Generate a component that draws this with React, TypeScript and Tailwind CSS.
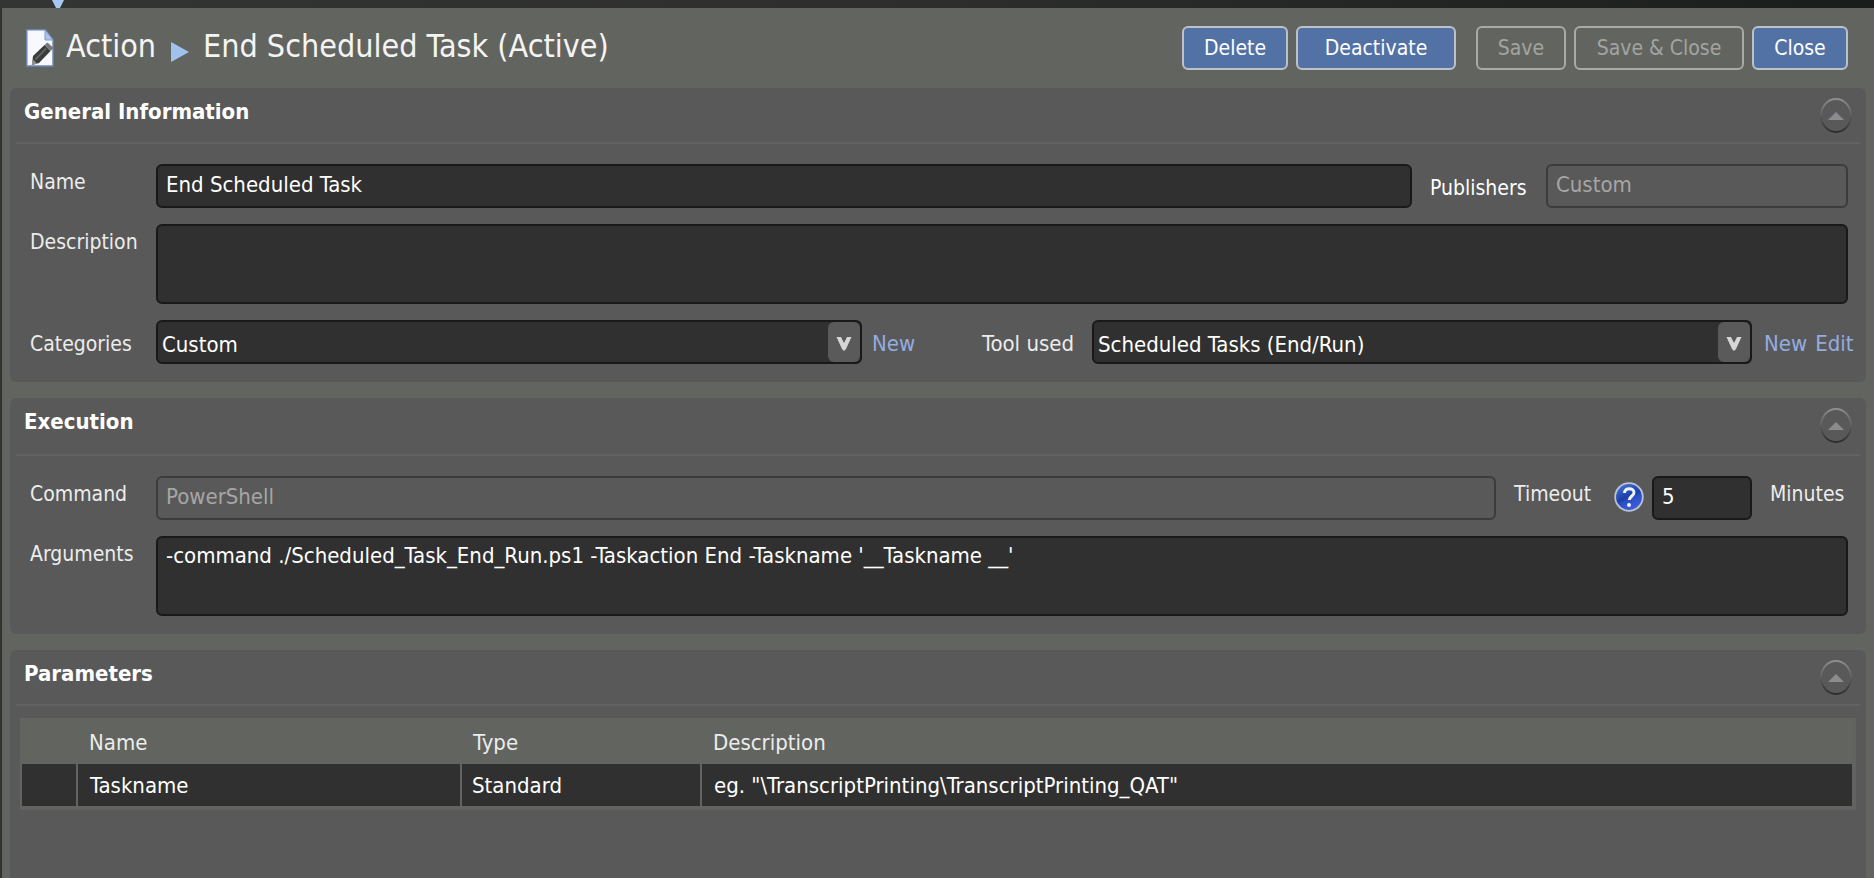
import React, { useState } from 'react';

const fieldBase = 'block w-full rounded-md border-2 px-2 text-[22px] outline-none';
const fieldDark = fieldBase + ' border-[#191919] bg-[#303030] text-white';
const fieldOff = fieldBase + ' border-[#3c3c3c] bg-transparent text-[#a6a6a6]';
const fieldLine = ' h-11 pb-1 leading-9';
const fieldArea = ' h-20 resize-none py-1 leading-7';

const buttonBase = 'h-11 rounded-md border-2 text-[21px] leading-10';
const buttonBlue = buttonBase + ' border-[#bdc1c8] bg-[#5272a6] text-white';
const buttonOff = buttonBase + ' border-[#a9aaa8] text-[#a3a4a2]';

function CollapseIcon({ id }: { id: string }) {
  return (
    <svg width="32" height="36" viewBox="0 0 32 36" aria-hidden="true">
      <defs>
        <linearGradient id={id} x1="0" y1="0" x2="0" y2="1">
          <stop offset="0" stopColor="#8e8e8e" />
          <stop offset="0.5" stopColor="#5e5e5e" />
          <stop offset="1" stopColor="#2c2c2c" />
        </linearGradient>
      </defs>
      <ellipse cx="16" cy="17.500" rx="15" ry="16.500" fill="none" stroke={`url(#${id})`} strokeWidth="1.8" />
      <path d="M16 14l8 8H8z" fill="#8c8c8f" />
    </svg>
  );
}

function Panel(props: { id: string; title: string; head: string; className?: string; children: React.ReactNode }) {
  const [open, setOpen] = useState(true);
  return (
    <section className={'rounded-md bg-[#595959] ' + (props.className ?? '')}>
      <div className={'mx-1.5 flex items-start justify-between border-b-2 border-[#626262] pr-2 pl-2 ' + props.head}>
        <h2 className="pt-2.5 text-[22px] leading-7 font-bold text-white">{props.title}</h2>
        <button type="button" aria-label={'Collapse ' + props.title} className="mt-2.5" onClick={() => setOpen(!open)}>
          <CollapseIcon id={props.id} />
        </button>
      </div>
      {open && props.children}
    </section>
  );
}

function Select({ id, value }: { id: string; value: string }) {
  return (
    <div className="grid">
      <select
        id={id}
        defaultValue={value}
        className="col-start-1 row-start-1 h-11 w-full appearance-none rounded-md border-2 border-[#191919] bg-[#303030] pt-1 pl-1 text-[22px] text-white outline-none"
      >
        <option>{value}</option>
      </select>
      <span className="pointer-events-none col-start-1 row-start-1 m-0.5 flex w-8 items-center justify-center justify-self-end rounded-md bg-[#5a5a5a] pt-1">
        <svg width="16" height="16" viewBox="0 0 16 16" aria-hidden="true">
          <path d="M0.500 1h4.500l3 6 3-6h4.500L10 13l-2 2-2-2z" fill="#d6d6d6" />
        </svg>
      </span>
    </div>
  );
}

const label = 'pt-1 text-[21px] leading-7 text-[#ececec]';
const link = 'text-[#94ace0]';

export default function App() {
  return (
    <div className="flex min-h-screen flex-col bg-[#323432] font-['DejaVu_Sans_Condensed','Noto_Sans',sans-serif]">
      <div className="flex h-2 bg-linear-to-r from-[#333533] via-[#2c2d2c] to-[#1a1e1b] pl-[51px]">
        <svg width="14" height="8" viewBox="0 0 14 8" aria-hidden="true">
          <path d="M1 0h12L9 8H5z" fill="#a6c8f2" />
        </svg>
      </div>
      <main className="ml-0.5 flex grow flex-col bg-[#626460] pr-2 pl-2">
        <header className="flex h-20 items-start pt-[18px] pr-[18px] pl-4">
          <svg className="mt-[3px]" width="28" height="38" viewBox="0 0 28 38" aria-hidden="true">
            <path d="M0.800 0.800h18.200L27 11v26H0.800z" fill="#f7f9ff" stroke="#6c86b4" strokeWidth="1.4" />
            <path d="M19 0.800V11h8z" fill="#a9c4ec" stroke="#7f9cc8" />
            <path d="M6 36l1-9L18.500 16l6 6L13 34z" fill="#3b3d3b" />
            <path d="M5.500 36.500l1.500-6 4 4z" fill="#8f918f" />
            <path d="M9.500 30.500L20 19.500" stroke="#6a6c6a" strokeWidth="1.5" />
            <path d="M18.500 16l3-2.500 6 5.500-3 3z" fill="#777977" />
          </svg>
          <h1 className="flex items-center pt-0.5 text-[32px] leading-9 text-[#f4f4f4]">
            <span className="w-[117px] pl-3">Action</span>
            <svg className="mt-3 mr-3.5" width="18" height="20" viewBox="0 0 18 20" aria-hidden="true">
              <path d="M0 0l18 10L0 20z" fill="#a0c3ee" />
            </svg>
            <span>End Scheduled Task (Active)</span>
          </h1>
          <div className="ml-auto flex gap-2">
            <button type="button" className={buttonBlue + ' w-[106px]'}>Delete</button>
            <button type="button" className={buttonBlue + ' mr-3 w-40'}>Deactivate</button>
            <button type="button" disabled className={buttonOff + ' w-[90px]'}>Save</button>
            <button type="button" disabled className={buttonOff + ' w-[170px]'}>Save &amp; Close</button>
            <button type="button" className={buttonBlue + ' w-24'}>Close</button>
          </div>
        </header>

        <Panel id="c1" title="General Information" head="h-14">
          <div className="flex flex-col gap-4 pt-5 pr-[18px] pb-[18px] pl-5">
            <div className="grid grid-cols-[126px_1fr_134px_302px]">
              <label htmlFor="name" className={label}>Name</label>
              <input id="name" defaultValue="End Scheduled Task" className={fieldDark + fieldLine} />
              <label htmlFor="publishers" className="self-center pt-1 pl-[18px] text-[21px] leading-7 text-white">Publishers</label>
              <input id="publishers" disabled defaultValue="Custom" className={fieldOff + fieldLine} />
            </div>
            <div className="grid grid-cols-[126px_1fr]">
              <label htmlFor="description" className={label}>Description</label>
              <textarea id="description" className={fieldDark + fieldArea} />
            </div>
            <div className="grid grid-cols-[126px_706fr_230px_660fr_96px] items-center">
              <label htmlFor="categories" className={label}>Categories</label>
              <Select id="categories" value="Custom" />
              <div className="flex justify-between pt-1 pr-[18px] pl-2.5 text-[22px] leading-7 text-[#ececec]">
                <a href="#new-category" className={link}>New</a>
                <label htmlFor="tool">Tool used</label>
              </div>
              <Select id="tool" value="Scheduled Tasks (End/Run)" />
              <div className="flex gap-2 pt-1 pl-3 text-[22px] leading-7">
                <a href="#new-tool" className={link}>New</a>
                <a href="#edit-tool" className={link}>Edit</a>
              </div>
            </div>
          </div>
        </Panel>

        <Panel id="c2" title="Execution" head="h-[58px]" className="mt-4">
          <div className="flex flex-col gap-4 pt-5 pr-[18px] pb-[18px] pl-5">
            <div className="grid grid-cols-[126px_1fr_156px_100px_96px]">
              <label htmlFor="command" className={label}>Command</label>
              <input id="command" disabled defaultValue="PowerShell" className={fieldOff + fieldLine} />
              <div className="flex justify-between pr-2 pl-[18px]">
                <label htmlFor="timeout" className={label}>Timeout</label>
                <button type="button" aria-label="Help" className="self-start pt-1.5">
                  <svg width="30" height="30" viewBox="0 0 30 30" aria-hidden="true">
                    <defs>
                      <linearGradient id="help" x1="0.2" y1="0" x2="0.7" y2="1">
                        <stop offset="0" stopColor="#4a74d8" />
                        <stop offset="0.5" stopColor="#1a3fa8" />
                        <stop offset="0.6" stopColor="#2b4fc6" />
                        <stop offset="1" stopColor="#3f62dc" />
                      </linearGradient>
                    </defs>
                    <circle cx="15" cy="15" r="13.800" fill="url(#help)" stroke="#b9c1d4" strokeWidth="1.8" />
                    <path d="M10.500 11c0-6 9.500-5.500 9.500-.5 0 3.500-4.800 4-4.800 7.500" fill="none" stroke="#f1f3fa" strokeWidth="3" />
                    <circle cx="15" cy="23" r="2" fill="#f1f3fa" />
                  </svg>
                </button>
              </div>
              <input id="timeout" defaultValue="5" className={fieldDark + fieldLine} />
              <span className={label + ' pl-[18px]'}>Minutes</span>
            </div>
            <div className="grid grid-cols-[126px_1fr]">
              <label htmlFor="arguments" className={label}>Arguments</label>
              <textarea
                id="arguments"
                spellCheck={false}
                defaultValue="-command ./Scheduled_Task_End_Run.ps1 -Taskaction End -Taskname '__Taskname __'"
                className={fieldDark + fieldArea}
              />
            </div>
          </div>
        </Panel>

        <Panel id="c3" title="Parameters" head="h-14" className="mt-4 grow rounded-b-none">
          <div className="pt-3 pr-2.5 pl-2.5">
            <div className="border-r-2 border-b-2 border-[#626262]">
              <table className="w-full table-fixed border-collapse border-2 border-[#626460] text-left text-[22px] leading-7">
                <colgroup>
                  <col className="w-14" />
                  <col className="w-96" />
                  <col className="w-60" />
                  <col />
                </colgroup>
                <thead className="bg-[#626460] text-[#ececec]">
                  <tr className="h-11">
                    <th aria-label="Select" />
                    <th className="pt-1 pl-3 font-normal">Name</th>
                    <th className="pt-1 pl-3 font-normal">Type</th>
                    <th className="pt-1 pl-3 font-normal">Description</th>
                  </tr>
                </thead>
                <tbody className="bg-[#303030] text-white">
                  <tr className="h-11">
                    <td className="border-2 border-[#626460]" />
                    <td className="border-2 border-[#626460] pt-0.5 pl-3">Taskname</td>
                    <td className="border-2 border-[#626460] pt-0.5 pl-2.5">Standard</td>
                    <td className="border-2 border-[#626460] pt-0.5 pl-3">eg. "\TranscriptPrinting\TranscriptPrinting_QAT"</td>
                  </tr>
                </tbody>
              </table>
            </div>
          </div>
        </Panel>
      </main>
    </div>
  );
}
